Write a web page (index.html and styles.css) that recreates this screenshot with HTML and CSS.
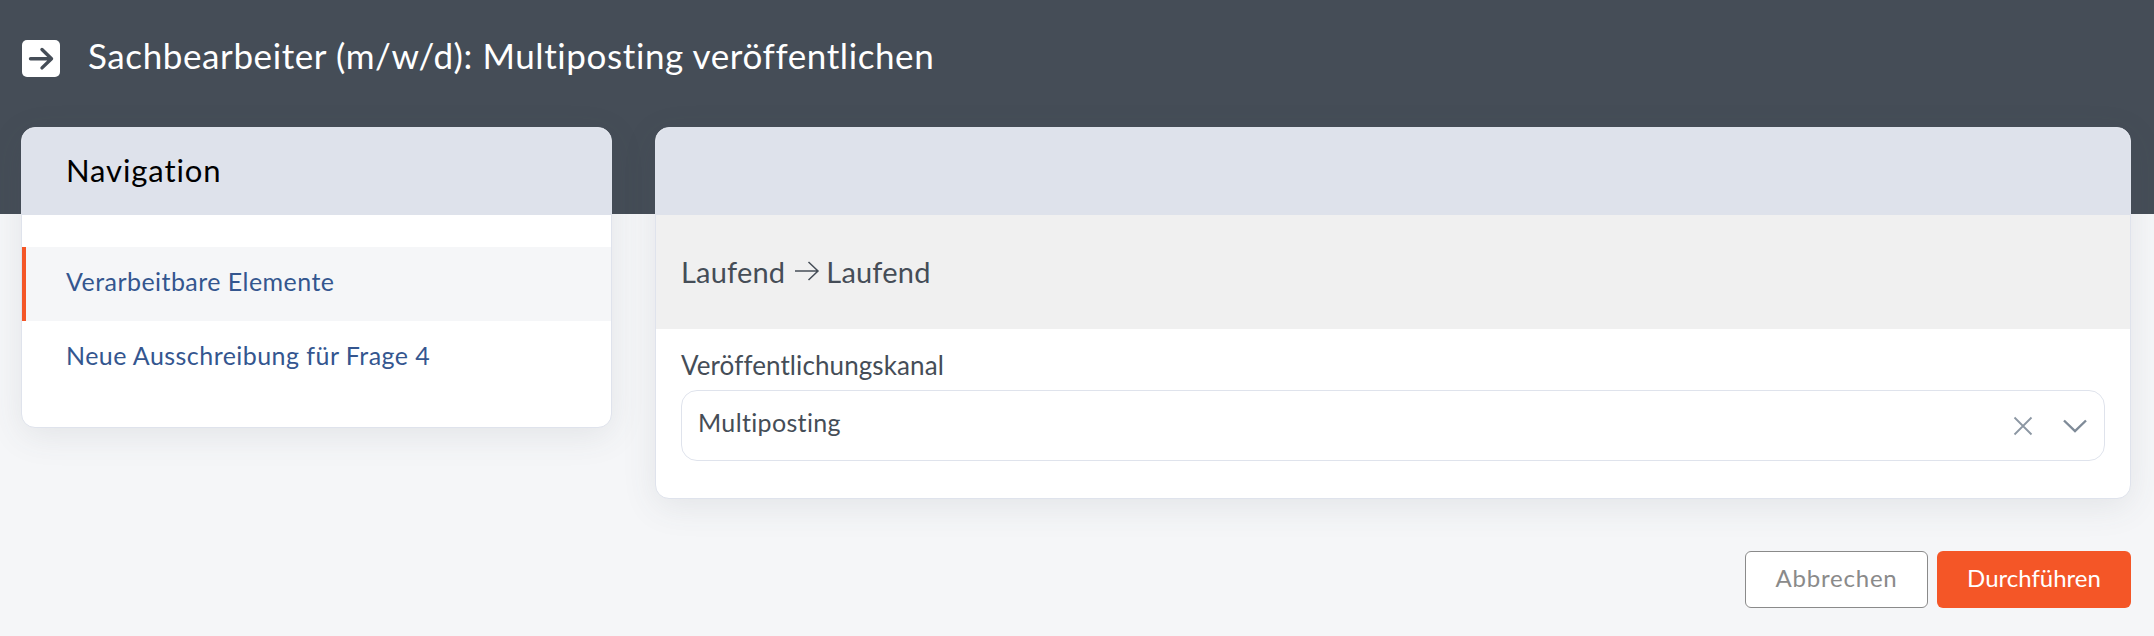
FILE: index.html
```html
<!DOCTYPE html>
<html lang="de">
<head>
<meta charset="utf-8">
<title>Sachbearbeiter (m/w/d): Multiposting veröffentlichen</title>
<link rel="stylesheet" href="styles.css">
</head>
<body>
<header class="topbar">
  <span class="topbar-icon">
    <svg viewBox="0 0 38 37" width="38" height="37"><path d="M8.500 18.700h21M20 9.500l9.500 9.200-9.500 9.200" fill="none" stroke="#454d57" stroke-width="3.400" stroke-linecap="round" stroke-linejoin="round"/></svg>
  </span>
  <h1 class="topbar-title">Sachbearbeiter (m/w/d): Multiposting veröffentlichen</h1>
</header>
<main class="content">
  <aside class="card nav-card">
    <div class="card-head"><h2 class="card-title">Navigation</h2></div>
    <nav class="nav-list">
      <a class="nav-item nav-item-active">Verarbeitbare Elemente</a>
      <a class="nav-item">Neue Ausschreibung für Frage 4</a>
    </nav>
  </aside>
  <section class="card main-card">
    <div class="card-head"></div>
    <div class="status-band">
      <span class="status-word">Laufend</span>
      <svg class="status-arrow" viewBox="0 0 26 22" width="26" height="22"><path d="M1 11h23M14.500 2l9.500 9-9.500 9" fill="none" stroke="#454d57" stroke-width="1.500"/></svg>
      <span class="status-word">Laufend</span>
    </div>
    <div class="form-body">
      <label class="field-label">Veröffentlichungskanal</label>
      <div class="select-box">
        <span class="select-value">Multiposting</span>
        <svg class="select-clear" viewBox="0 0 20 20" width="20" height="20"><path d="M1.500 1.500l17 17M18.500 1.500l-17 17" fill="none" stroke="#8c97a3" stroke-width="1.800"/></svg>
        <svg class="select-caret" viewBox="0 0 26 16" width="26" height="16"><path d="M2 2.500l11 10.500 11-10.500" fill="none" stroke="#7f8b98" stroke-width="2.400"/></svg>
      </div>
    </div>
  </section>
</main>
<footer class="actions">
  <button class="btn btn-cancel">Abbrechen</button>
  <button class="btn btn-primary">Durchführen</button>
</footer>
</body>
</html>
```
FILE: styles.css
```css
* { box-sizing: border-box; }
html, body { margin: 0; padding: 0; }
body {
  width: 2154px;
  height: 636px;
  overflow: hidden;
  background: #f5f6f8;
  font-family: "Lato", "Noto Sans", sans-serif;
  font-variant-ligatures: none;
  color: #454d57;
}
.topbar {
  height: 214px;
  background: #454d57;
  display: flex;
  align-items: flex-start;
  padding: 40px 22px 0;
  gap: 28px;
}
.topbar-icon {
  width: 38px;
  height: 37px;
  background: #fff;
  border-radius: 5px;
  display: flex;
}
.topbar-title {
  margin: -3px 0 0;
  font-size: 35px;
  line-height: 37px;
  letter-spacing: .6px;
  font-weight: 400;
  color: #fff;
}
.content {
  margin-top: -87px;
  padding: 0 23px 0 21px;
  display: flex;
  align-items: flex-start;
  gap: 43px;
}
.card {
  background: #fff;
  border: 1px solid #dfe3ec;
  border-radius: 14px;
  box-shadow: 0 8px 34px rgba(69, 77, 88, .1);
  overflow: hidden;
}
.nav-card { width: 591px; height: 301px; }
.main-card { flex: 1; height: 372px; }
.card-head {
  height: 87px;
  background: #dee2eb;
  display: flex;
  align-items: center;
  padding: 0 44px 3px;
}
.card-title {
  margin: 0;
  font-size: 31px;
  letter-spacing: .9px;
  font-weight: 400;
  color: #000;
}
.nav-list { padding: 32px 0; display: flex; flex-direction: column; }
.nav-item {
  height: 74px;
  display: flex;
  align-items: center;
  padding: 0 0 6px 44px;
  font-size: 25px;
  letter-spacing: .45px;
  color: #34568f;
}
.nav-item-active {
  background: #f5f6f8;
  box-shadow: inset 4px 0 0 #f45627;
}
.status-band {
  height: 114px;
  background: #f0f0f0;
  display: flex;
  align-items: center;
  padding: 0 25px 2px;
  gap: 9px;
  font-size: 29px;
  letter-spacing: .2px;
}
.status-arrow { margin-right: -3px; }
.form-body { padding: 0 25px; }
.field-label {
  display: flex;
  height: 61px;
  align-items: center;
  padding-top: 10px;
  font-size: 26px;
  letter-spacing: .1px;
}
.select-box {
  height: 71px;
  border: 1px solid #dfe3ec;
  border-radius: 16px;
  display: flex;
  align-items: center;
  padding: 0 16px;
}
.select-value {
  flex: 1;
  padding-bottom: 7px;
  font-size: 25px;
  letter-spacing: .35px;
}
.select-clear { margin-right: 29px; }
.btn {
  height: 57px;
  border-radius: 6px;
  font-family: inherit;
  font-variant-ligatures: none;
  font-size: 24px;
  padding: 0 0 4px;
}
.actions {
  margin-top: 52px;
  padding-right: 23px;
  display: flex;
  justify-content: flex-end;
  gap: 9px;
}
.btn-cancel {
  width: 183px;
  background: #fff;
  border: 1px solid #8a8a8a;
  color: #8a8a8a;
  letter-spacing: .8px;
}
.btn-primary {
  width: 194px;
  background: #f45627;
  border: 0;
  color: #fff;
}
```
